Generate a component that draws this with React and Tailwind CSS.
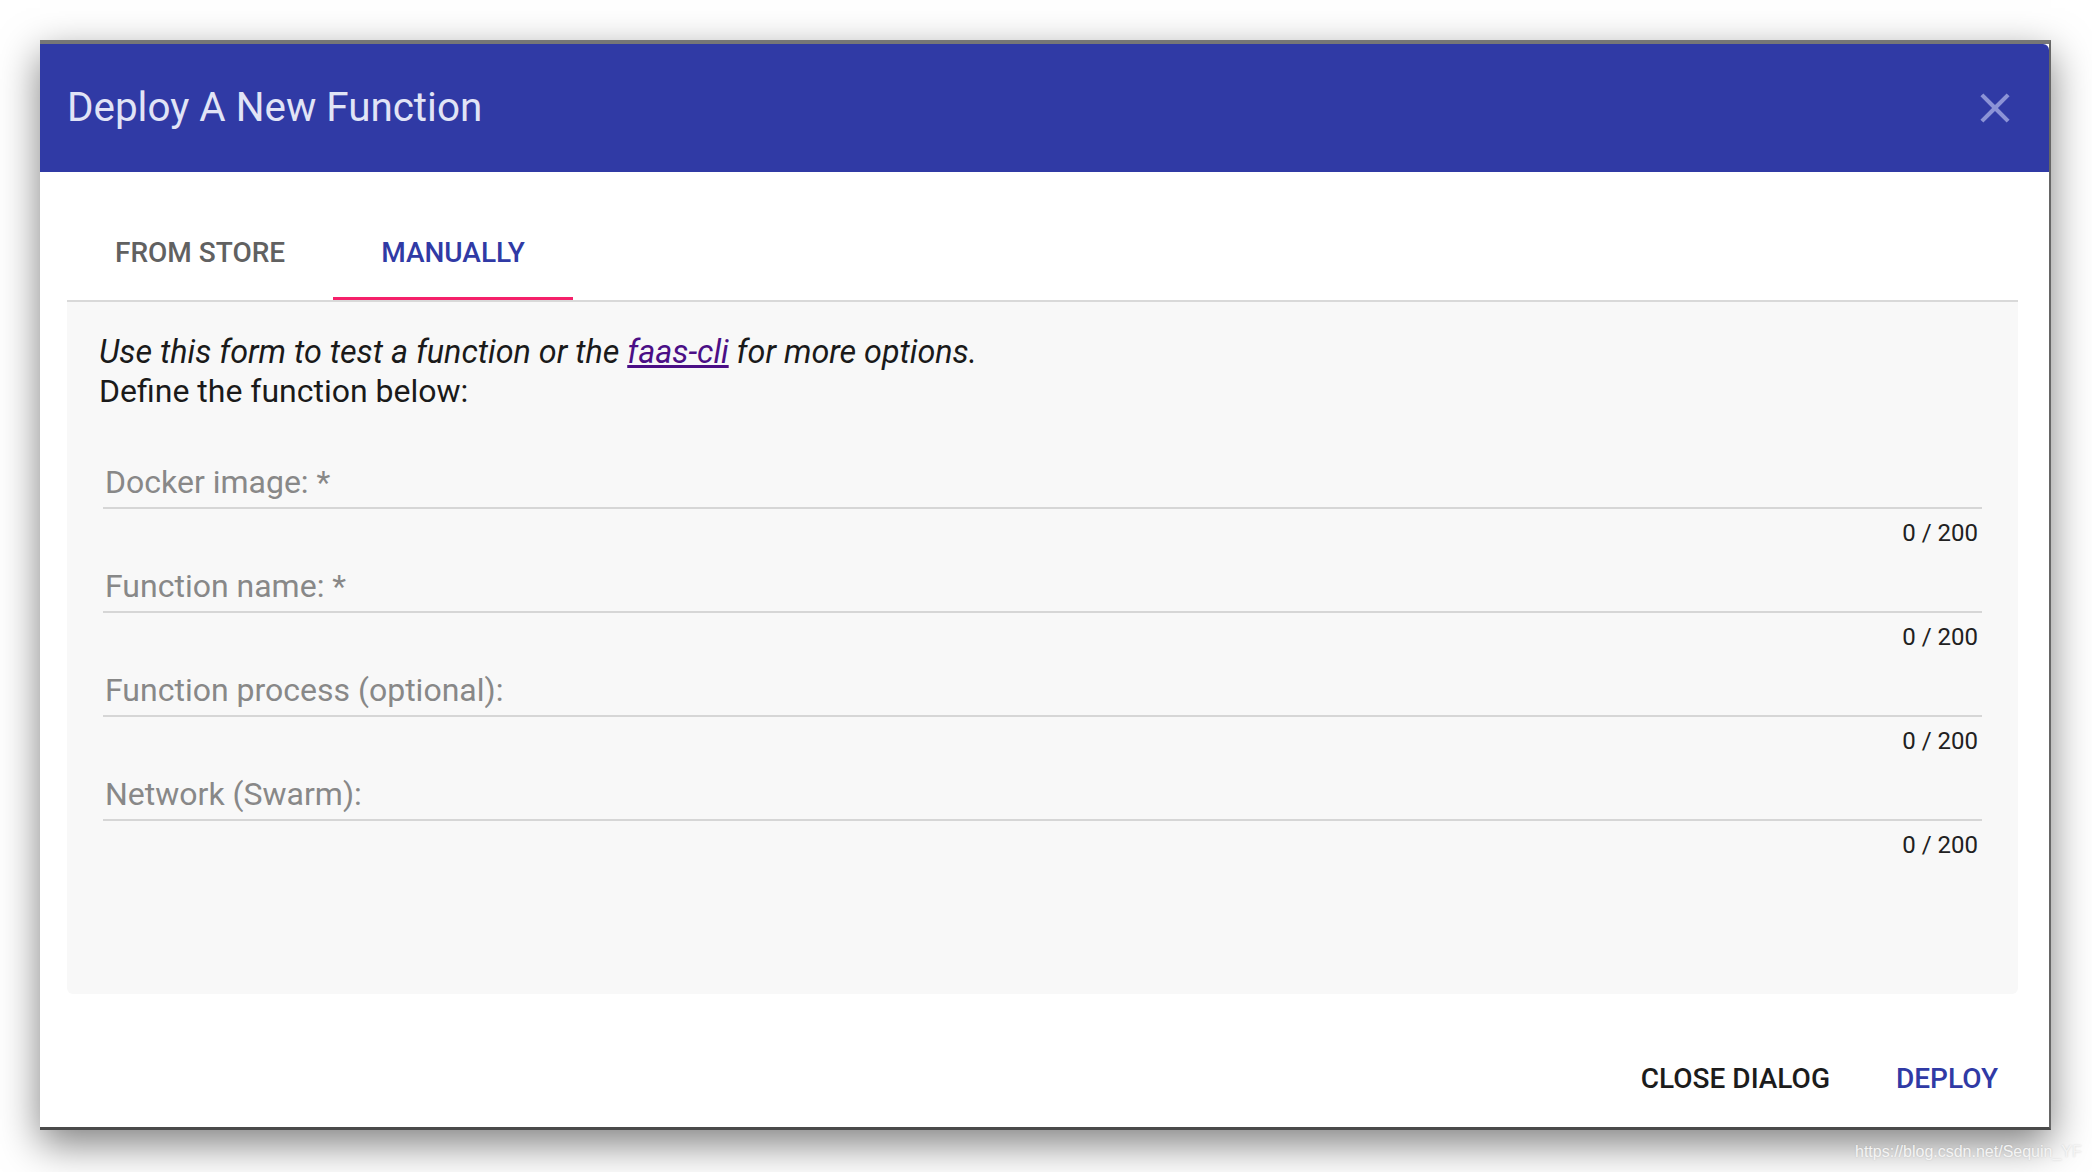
import React from 'react';

const fields = [
  'Docker image: *',
  'Function name: *',
  'Function process (optional):',
  'Network (Swarm):',
];

const CloseIcon = () => (
  <svg width="50" height="50" viewBox="0 0 24 24" fill="#8c93d6">
    <path d="M19 6.41 17.59 5 12 10.59 6.41 5 5 6.41 10.59 12 5 17.59 6.41 19 12 13.41 17.59 19 19 17.59 13.41 12z" />
  </svg>
);

const Field = ({ label }) => (
  <div className="mb-[21px] ml-[4px]">
    <div className="pb-[6px] border-b-2 border-[#d6d6d6]">
      <div className="ml-[2px] text-[32px] leading-[37px] text-[#888888]">{label}</div>
    </div>
    <div className="mt-[10px] pr-[4px] text-right text-[24px] leading-[28px] text-[#212121]">0 / 200</div>
  </div>
);

export default function App() {
  return (
    <div className="relative w-[2092px] h-[1172px] overflow-hidden bg-white font-['Roboto',sans-serif]">
      <div className="pt-[40px] pl-[40px]">
        {/* Dialog */}
        <div className="w-[2011px] h-[1090px] bg-white border-t-4 border-t-[#777777] border-r-2 border-r-[#666666] border-b-[3px] border-b-[#4a4a4a] shadow-[0_14px_38px_rgba(0,0,0,0.5)] flex flex-col">
          <div className="h-[128px] bg-[#303aa5] rounded-tr-[6px] flex items-center justify-between pl-[27px] pr-[29px]">
            <h2 className="text-[40.4px] font-normal text-[#e1e4f6]">Deploy A New Function</h2>
            <CloseIcon />
          </div>

          <div className="pl-[27px] pr-[31px]">
            {/* Tabs */}
            <div className="pt-[34px] flex border-b-2 border-[#d9d9d9]">
              <div className="relative h-[94px] px-[48px] flex items-center text-[28px] font-medium uppercase text-[#616161]">
                From Store
              </div>
              <div className="relative h-[94px] px-[48px] flex items-center text-[28px] font-medium uppercase text-[#303aa5]">
                Manually
                <span className="absolute left-0 right-0 bottom-0 h-[3.5px] bg-[#f5206a]"></span>
              </div>
            </div>

            {/* Form panel */}
            <div className="h-[692px] bg-[#f8f8f8] rounded-b-[6px] pt-[31px] pl-[32px] pr-[36px]">
              <p className="text-[32px] leading-[39px] text-[#1a1a1a]">
                <i className="text-[32.3px]">
                  Use this form to test a function or the{' '}
                  <a href="#" className="underline text-[#4b0f86]">faas-cli</a> for more options.
                </i>
                <br />
                Define the function below:
              </p>
              <div className="mt-[53px]">
                {fields.map((f) => (
                  <Field key={f} label={f} />
                ))}
              </div>
            </div>

            {/* Actions */}
            <div className="pt-[67px] pr-[4px] flex justify-end gap-[34px]">
              <button className="px-[16px] text-[28px] leading-[36px] font-medium uppercase text-[#1c1c1c]">
                Close Dialog
              </button>
              <button className="px-[16px] text-[28px] leading-[36px] font-medium uppercase text-[#303aa5]">
                Deploy
              </button>
            </div>
          </div>
        </div>
      </div>

      <div className="absolute left-[1855px] top-[1142px] whitespace-nowrap text-[16px] leading-[20px] text-[#f4f4f4] font-['Liberation_Sans',sans-serif] [text-shadow:0_0_2px_rgba(0,0,0,0.15)]">
        https://blog.csdn.net/Sequin_YF
      </div>
    </div>
  );
}
